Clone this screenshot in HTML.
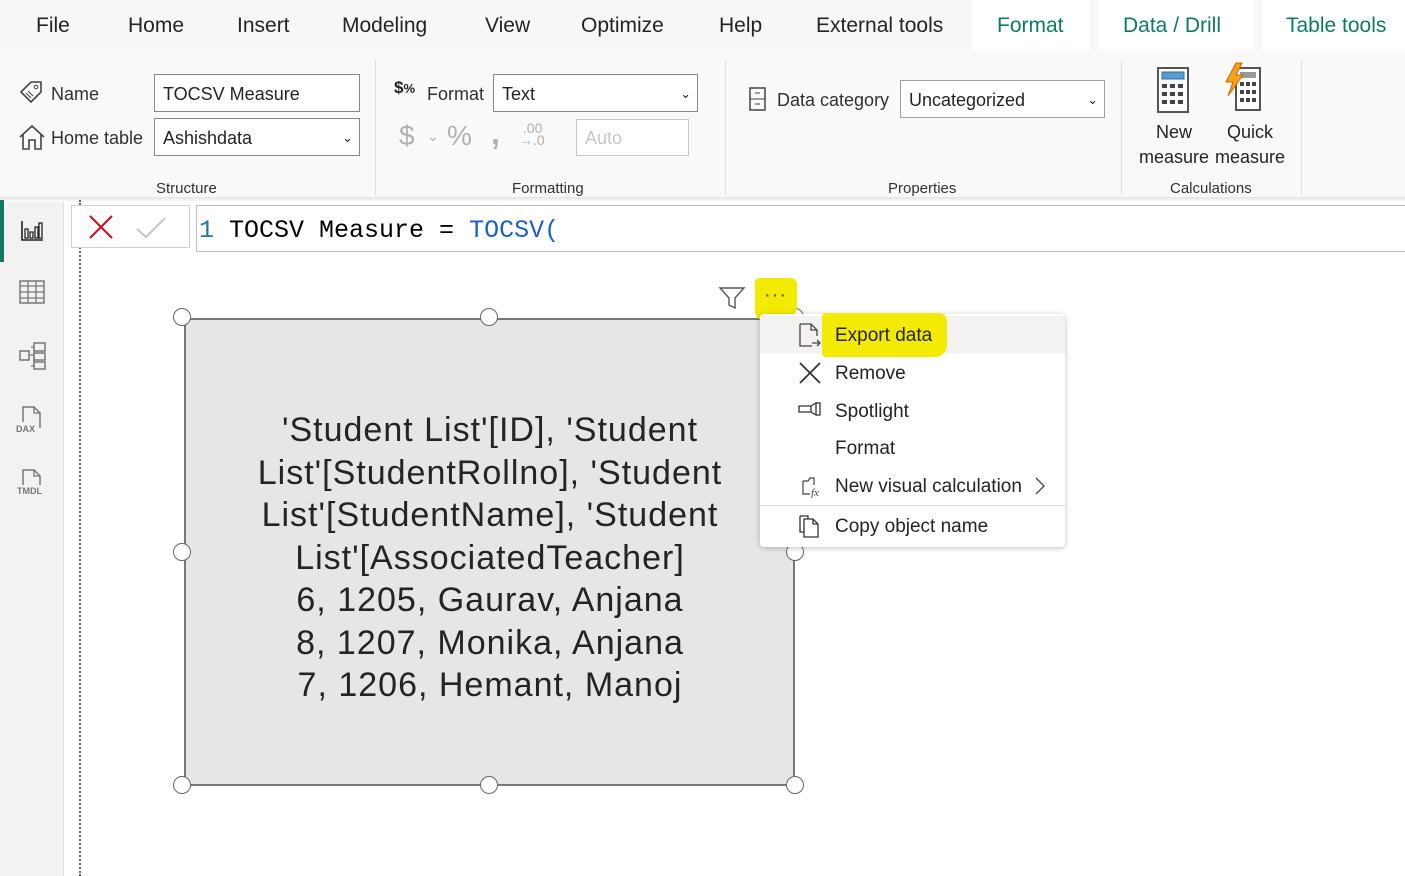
<!DOCTYPE html>
<html><head><meta charset="utf-8"><style>
*{margin:0;padding:0;box-sizing:border-box}
body{width:1405px;height:876px;overflow:hidden;background:#fff;font-family:"Liberation Sans",sans-serif;position:relative;color:#252423}
.a{position:absolute}
.tab{position:absolute;top:1px;height:50px;line-height:50px;font-size:21px;color:#252423}
.tabg{color:#117865;background:#fff;top:0}
.inp{position:absolute;border:1px solid #8a8886;background:#fff;font-size:18px;padding-left:8px;line-height:38px;height:38px}
.lbl{position:absolute;font-size:18px;color:#323130}
.grp{position:absolute;top:180px;font-size:15px;color:#323130}
.sep{position:absolute;top:60px;width:1px;height:135px;background:#e1dfdd}
.mi{position:absolute;left:835px;font-size:19px;color:#252423}
.h{position:absolute;width:18px;height:18px;border:1.5px solid #666;border-radius:50%;background:#fff}
</style></head><body>
<div class="a" style="left:0;top:0;width:1405px;height:50px;background:#f7f7f7"></div>
<div class="tab" style="left:36px">File</div>
<div class="tab" style="left:128px">Home</div>
<div class="tab" style="left:237px">Insert</div>
<div class="tab" style="left:342px">Modeling</div>
<div class="tab" style="left:485px">View</div>
<div class="tab" style="left:581px">Optimize</div>
<div class="tab" style="left:719px">Help</div>
<div class="tab" style="left:816px">External tools</div>
<div class="tab tabg" style="left:972px;width:118px;padding-left:25px;line-height:52px">Format</div>
<div class="tab tabg" style="left:1098px;width:156px;padding-left:25px;line-height:52px">Data / Drill</div>
<div class="tab tabg" style="left:1262px;width:143px;padding-left:24px;line-height:52px">Table tools</div>
<div class="a" style="left:0;top:50px;width:1405px;height:148px;background:#f9f9f9;border-bottom:1px solid #e6e6e6"></div>
<div class="a" style="left:0;top:198px;width:1405px;height:4px;background:linear-gradient(#e8e8e8,#fff)"></div>
<!-- Structure -->
<svg class="a" style="left:18px;top:79px" width="26" height="26" viewBox="0 0 26 26"><path d="M3 13 L13 3 H23 V13 L13 23 Z" fill="none" stroke="#444" stroke-width="1.6"/><circle cx="18" cy="8" r="1.8" fill="none" stroke="#444"/><path d="M8 14l5 5M10 12l5 5" stroke="#444"/></svg>
<div class="lbl" style="left:51px;top:84px">Name</div>
<svg class="a" style="left:18px;top:123px" width="28" height="28" viewBox="0 0 28 28"><path d="M2 14 L14 3 L26 14 M5 11 V26 H11 V17 H17 V26 H23 V11" fill="none" stroke="#444" stroke-width="1.6"/></svg>
<div class="lbl" style="left:51px;top:128px">Home table</div>
<div class="inp" style="left:154px;top:74px;width:206px">TOCSV Measure</div>
<div class="inp" style="left:154px;top:118px;width:206px">Ashishdata<span class="a" style="right:6px;top:0;font-size:13px">&#8964;</span></div>
<div class="grp" style="left:156px">Structure</div>
<div class="sep" style="left:375px"></div>
<!-- Formatting -->
<div class="a" style="left:394px;top:78px;font-size:17px;font-weight:bold;color:#222">$<span style="font-size:13px">%</span></div>
<div class="lbl" style="left:427px;top:84px">Format</div>
<div class="inp" style="left:493px;top:74px;width:205px">Text<span class="a" style="right:6px;top:0;font-size:13px">&#8964;</span></div>
<div class="a" style="left:399px;top:120px;font-size:28px;color:#b3b0ad">$</div>
<div class="a" style="left:427px;top:128px;font-size:14px;color:#b3b0ad">&#8964;</div>
<div class="a" style="left:447px;top:120px;font-size:28px;color:#b3b0ad">%</div>
<div class="a" style="left:491px;top:115px;font-size:32px;font-weight:bold;color:#b3b0ad">,</div>
<div class="a" style="left:519px;top:122px;font-size:14px;color:#b3b0ad;line-height:12px">&nbsp;.00<br><span style="color:#8cc3e8">→</span>.0</div>
<div class="inp" style="left:576px;top:119px;width:113px;height:37px;border-color:#c8c6c4;color:#c8c6c4;line-height:36px">Auto</div>
<div class="grp" style="left:512px">Formatting</div>
<div class="sep" style="left:725px"></div>
<!-- Properties -->
<svg class="a" style="left:748px;top:86px" width="20" height="26" viewBox="0 0 20 26"><rect x="2" y="2" width="15" height="22" fill="none" stroke="#444" stroke-width="1.5"/><path d="M2 13H17M7 7h5M7 18h5" stroke="#444"/></svg>
<div class="lbl" style="left:777px;top:90px">Data category</div>
<div class="inp" style="left:900px;top:80px;width:205px;border-color:#a19f9d">Uncategorized<span class="a" style="right:6px;top:0;font-size:13px">&#8964;</span></div>
<div class="grp" style="left:888px">Properties</div>
<div class="sep" style="left:1121px"></div>
<!-- Calculations -->
<svg class="a" style="left:1155px;top:66px" width="36" height="48" viewBox="0 0 36 48"><rect x="3" y="2" width="30" height="44" fill="#fff" stroke="#555" stroke-width="2"/><rect x="7" y="6" width="22" height="7" fill="#5b9bd5" stroke="#2e6da4"/><g fill="#444"><rect x="7" y="18" width="5" height="4"/><rect x="15" y="18" width="5" height="4"/><rect x="23" y="18" width="5" height="4"/><rect x="7" y="26" width="5" height="4"/><rect x="15" y="26" width="5" height="4"/><rect x="23" y="26" width="5" height="4"/><rect x="7" y="34" width="5" height="4"/><rect x="15" y="34" width="5" height="4"/><rect x="23" y="34" width="5" height="4"/></g></svg>
<svg class="a" style="left:1224px;top:62px" width="44" height="52" viewBox="0 0 44 52"><rect x="12" y="6" width="24" height="42" fill="#fff" stroke="#555" stroke-width="2"/><rect x="16" y="10" width="16" height="6" fill="#999"/><g fill="#444"><rect x="16" y="20" width="4" height="4"/><rect x="22" y="20" width="4" height="4"/><rect x="28" y="20" width="4" height="4"/><rect x="16" y="28" width="4" height="4"/><rect x="22" y="28" width="4" height="4"/><rect x="28" y="28" width="4" height="4"/><rect x="16" y="36" width="4" height="4"/><rect x="22" y="36" width="4" height="4"/><rect x="28" y="36" width="4" height="4"/></g><path d="M12 1 L2 20 H9 L4 34 L19 13 H12 L18 1Z" fill="#f7a21b" stroke="#c66a00"/></svg>
<div class="a" style="left:1138px;top:120px;font-size:18px;text-align:center;line-height:25px;width:72px">New<br>measure</div>
<div class="a" style="left:1210px;top:120px;font-size:18px;text-align:center;line-height:25px;width:80px">Quick<br>measure</div>
<div class="grp" style="left:1170px">Calculations</div>
<div class="sep" style="left:1301px"></div>
<!-- sidebar -->
<div class="a" style="left:0;top:202px;width:64px;height:674px;background:#f3f2f1;border-right:1px solid #e1dfdd"></div>
<div class="a" style="left:0;top:200px;width:4px;height:62px;background:#117865"></div>
<svg class="a" style="left:20px;top:218px" width="24" height="24" viewBox="0 0 24 24"><path d="M2 3V22H23" fill="none" stroke="#222" stroke-width="1.6"/><rect x="5" y="11" width="3" height="9" fill="none" stroke="#222" stroke-width="1.3"/><rect x="10" y="14" width="3" height="6" fill="none" stroke="#222" stroke-width="1.3"/><rect x="15" y="9" width="3" height="11" fill="none" stroke="#222" stroke-width="1.3"/><rect x="19" y="5" width="3" height="15" fill="none" stroke="#222" stroke-width="1.3"/></svg>
<svg class="a" style="left:19px;top:280px" width="26" height="24" viewBox="0 0 26 24"><rect x="1" y="1" width="24" height="22" fill="none" stroke="#777" stroke-width="1.5"/><path d="M1 6H25M1 12H25M1 18H25M9 1V23M17 1V23" stroke="#777" stroke-width="1.3"/></svg>
<svg class="a" style="left:18px;top:341px" width="30" height="30" viewBox="0 0 30 30"><rect x="2" y="10" width="9" height="9" fill="none" stroke="#777" stroke-width="1.5"/><rect x="16" y="2" width="11" height="8" fill="none" stroke="#777" stroke-width="1.5"/><rect x="16" y="12" width="11" height="7" fill="none" stroke="#777" stroke-width="1.5"/><rect x="16" y="21" width="11" height="7" fill="none" stroke="#777" stroke-width="1.5"/><path d="M11 14H16M13 6H16V25H13" fill="none" stroke="#777" stroke-width="1.3"/></svg>
<svg class="a" style="left:16px;top:404px" width="32" height="32" viewBox="0 0 32 32"><path d="M7 18V3H18L24 9V24" fill="none" stroke="#777" stroke-width="1.5"/><path d="M18 3V9H24" fill="none" stroke="#777" stroke-width="1.3"/><text x="0" y="28" font-size="9" font-family="Liberation Sans" font-weight="bold" fill="#777">DAX</text></svg>
<svg class="a" style="left:16px;top:467px" width="34" height="32" viewBox="0 0 34 32"><path d="M7 18V3H18L24 9V18" fill="none" stroke="#777" stroke-width="1.5"/><path d="M18 3V9H24" fill="none" stroke="#777" stroke-width="1.3"/><text x="1" y="27" font-size="9" font-family="Liberation Sans" font-weight="bold" fill="#777">TMDL</text></svg>
<!-- formula bar -->
<div class="a" style="left:79px;top:200px;width:0;height:676px;border-left:2px dotted #666"></div>
<div class="a" style="left:71px;top:205px;width:119px;height:43px;border:1px solid #d2d0ce;background:#fff"></div>
<svg class="a" style="left:88px;top:214px" width="26" height="26"><path d="M2 2L24 24M24 2L2 24" stroke="#c50f1f" stroke-width="2"/></svg>
<svg class="a" style="left:135px;top:216px" width="32" height="24"><path d="M2 13L11 21L30 2" fill="none" stroke="#c8c6c4" stroke-width="2"/></svg>
<div class="a" style="left:196px;top:205px;width:1209px;height:47px;border:1px solid #bdbdbd;border-right:none;background:#fff;font-family:'Liberation Mono',monospace;font-size:25px;line-height:50px;padding-left:2px;color:#000"><span style="color:#237893">1</span> TOCSV Measure = <span style="color:#1f5fbf">TOCSV(</span></div>
<!-- visual -->
<div class="a" style="left:184px;top:318px;width:611px;height:468px;background:#e6e6e6;border:2px solid #777"></div>
<div class="a" style="left:190px;top:409px;width:600px;text-align:center;font-size:34px;line-height:42.5px;letter-spacing:1px;color:#252423">'Student List'[ID], 'Student List'[StudentRollno], 'Student List'[StudentName], 'Student List'[AssociatedTeacher]<br>6, 1205, Gaurav, Anjana<br>8, 1207, Monika, Anjana<br>7, 1206, Hemant, Manoj</div>
<div class="h" style="left:173px;top:308px"></div><div class="h" style="left:480px;top:308px"></div>
<div class="h" style="left:173px;top:543px"></div><div class="h" style="left:786px;top:543px"></div>
<div class="h" style="left:173px;top:776px"></div><div class="h" style="left:480px;top:776px"></div><div class="h" style="left:786px;top:776px"></div>
<div class="h" style="left:786px;top:308px"></div>
<svg class="a" style="left:718px;top:286px" width="28" height="24"><path d="M2 2H26L17 12V22L11 19V12Z" fill="none" stroke="#555" stroke-width="1.4"/></svg>
<div class="a" style="left:755px;top:278px;width:42px;height:42px;background:#f2ea00;border-radius:4px 6px 14px 8px"></div>
<div class="a" style="left:764px;top:284px;font-size:20px;color:#555;letter-spacing:1px">···</div>
<!-- menu -->
<div class="a" style="left:760px;top:314px;width:305px;height:233px;background:#fff;border-radius:4px;box-shadow:0 1px 6px rgba(0,0,0,.25)"></div>
<div class="a" style="left:760px;top:316px;width:305px;height:37px;background:#f3f2f1"></div>
<div class="a" style="left:822px;top:313px;width:125px;height:44px;background:#f2ea00;border-radius:4px 8px 12px 4px"></div>
<div class="a" style="left:760px;top:505px;width:305px;height:1px;background:#e1dfdd"></div>
<svg class="a" style="left:798px;top:322px" width="24" height="26"><path d="M2 2H13L19 8V14M2 2V24H14" fill="none" stroke="#444" stroke-width="1.3"/><path d="M13 2V8H19M14 21H22M19 18L22 21L19 24" fill="none" stroke="#444" stroke-width="1.3"/></svg>
<div class="mi" style="top:325px">Export data</div>
<svg class="a" style="left:798px;top:361px" width="24" height="24"><path d="M2 2L22 22M22 2L2 22" stroke="#333" stroke-width="1.8"/></svg>
<div class="mi" style="top:363px">Remove</div>
<svg class="a" style="left:798px;top:402px" width="24" height="16"><path d="M1 4H13V10H1Z M13 4L18 1V13L13 10 M18 1H22V13H18" fill="none" stroke="#333" stroke-width="1.3"/></svg>
<div class="mi" style="top:401px">Spotlight</div>
<div class="mi" style="top:438px">Format</div>
<svg class="a" style="left:800px;top:476px" width="24" height="22"><path d="M3 5V18H10M3 5H8L10 2H14V9" fill="none" stroke="#444" stroke-width="1.2"/><text x="11" y="20" font-size="11" font-style="italic" fill="#444" font-family="Liberation Serif">fx</text></svg>
<div class="mi" style="top:476px">New visual calculation</div>
<svg class="a" style="left:1034px;top:476px" width="12" height="20"><path d="M2 2L10 10L2 18" fill="none" stroke="#444" stroke-width="1.3"/></svg>
<svg class="a" style="left:798px;top:514px" width="24" height="24"><path d="M2 2H10V5 M2 2V18H6" fill="none" stroke="#333" stroke-width="1.3"/><path d="M6 5H15L20 10V23H6Z M15 5V10H20" fill="none" stroke="#333" stroke-width="1.3"/></svg>
<div class="mi" style="top:516px">Copy object name</div>
</body></html>
